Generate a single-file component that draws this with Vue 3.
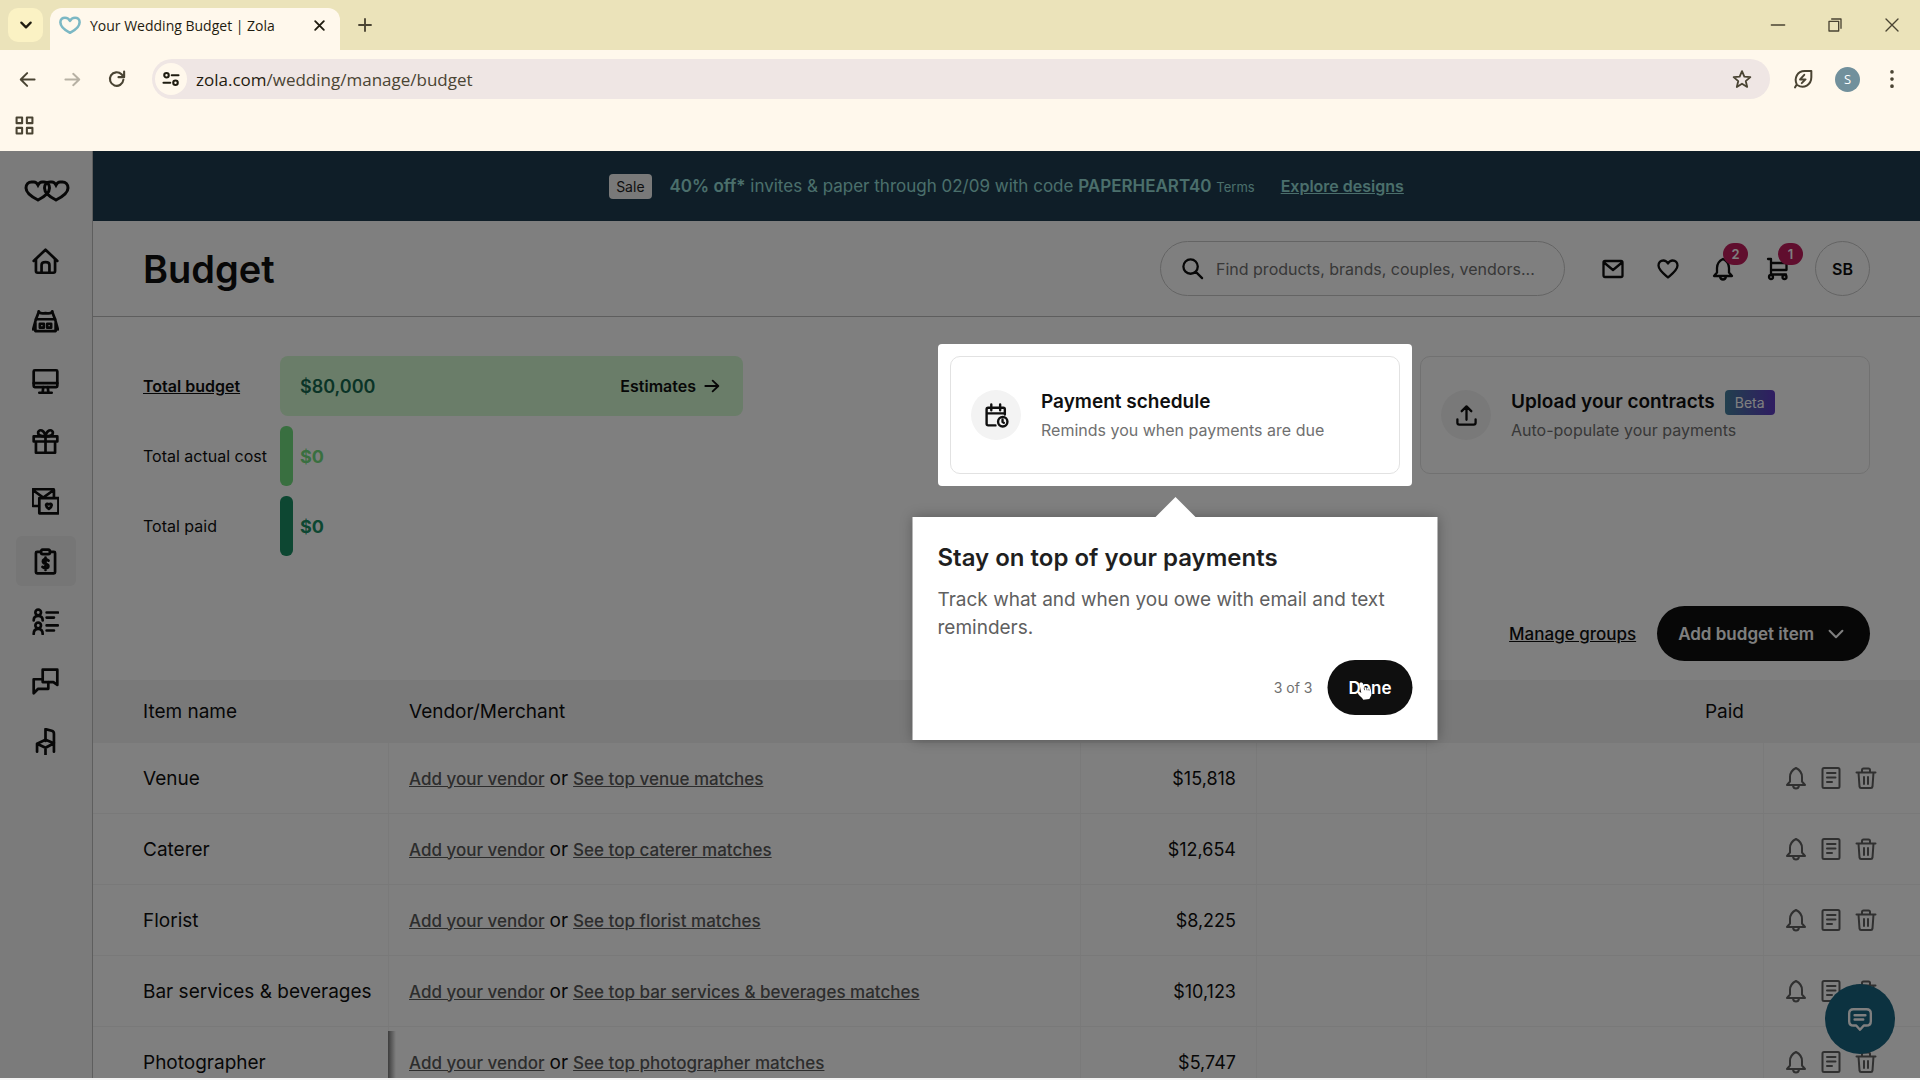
<template>
  <div class="window">
    <header class="chrome">
      <div class="tab-strip">
        <button class="tab-search" aria-label="Search tabs">
          <Icon name="chevron" :size="16" :stroke="3.4" />
        </button>
        <div class="tab">
          <Icon class="favicon" name="zheart" :size="22" :stroke="2.8" />
          <span class="tab-title">Your Wedding Budget | Zola</span>
          <button class="plain tab-close" aria-label="Close tab">
            <Icon name="close" :size="13" :stroke="3.4" />
          </button>
        </div>
        <button class="plain new-tab" aria-label="New tab">
          <Icon name="plus" :size="16" :stroke="2.8" />
        </button>
        <div class="window-controls">
          <button class="plain" aria-label="Minimize"><Icon name="minus" :size="16" :stroke="2" /></button>
          <button class="plain" aria-label="Restore"><Icon name="restore" :size="16" :stroke="2" /></button>
          <button class="plain" aria-label="Close"><Icon name="close" :size="18" :stroke="1.8" /></button>
        </div>
      </div>
      <div class="toolbar">
        <div class="nav-buttons">
          <button class="plain" aria-label="Back"><Icon name="back" :size="17" :stroke="2.8" /></button>
          <button class="plain faded" aria-label="Forward"><Icon name="forward" :size="17" :stroke="2.8" /></button>
          <button class="plain" aria-label="Reload"><Icon name="reload" :size="18" :stroke="2.8" /></button>
        </div>
        <div class="address">
          <span class="site-info"><Icon name="tune" :size="18" :stroke="2.8" /></span>
          <span class="url"><b>zola.com</b>/wedding/manage/budget</span>
          <button class="plain" aria-label="Bookmark"><Icon name="star" :size="20" :stroke="2.2" /></button>
        </div>
        <div class="toolbar-end">
          <button class="plain" aria-label="Energy saver"><Icon name="leaf" :size="20" :stroke="2.4" /></button>
          <button class="profile">S</button>
          <button class="plain" aria-label="Menu"><Icon name="dots" :size="20" :stroke="4.4" /></button>
        </div>
      </div>
      <div class="bookmarks">
        <button class="plain" aria-label="Apps"><Icon name="apps" :size="19" :stroke="2.6" /></button>
      </div>
    </header>

    <div class="page">
      <nav class="sidebar">
        <a href="#" class="logo" aria-label="Zola">
          <svg viewBox="0 0 46 22" width="46" height="22" aria-hidden="true">
            <path d="M14 20C8 17 2 13.500 2 8C2 4 4.500 2 7.500 2H10C12 2 13.200 3.500 14 5C14.800 3.500 16 2 18 2H20C23.500 2 25.500 4.500 25.500 8C25.500 13 20 17 14 20Z" />
            <path d="M32 20C26 17 20.500 13 20.500 8C20.500 4.500 22.500 2 26 2H28C30 2 31.200 3.500 32 5C32.800 3.500 34 2 36 2H38.500C41.500 2 44 4 44 8C44 13.500 38 17 32 20Z" />
          </svg>
        </a>
        <a
          v-for="item in navItems"
          :key="item.icon"
          href="#"
          class="nav-item"
          :class="{ active: item.active }"
          :aria-label="item.label"
        >
          <Icon :name="item.icon" :size="27" :stroke="2.4" />
        </a>
      </nav>

      <main class="main">
        <div class="banner">
          <span class="sale">Sale</span>
          <p class="promo">
            <b>40% off*</b> invites &amp; paper through 02/09 with code
            <b>PAPERHEART40</b> <a href="#" class="terms">Terms</a>
          </p>
          <a href="#" class="explore">Explore designs</a>
        </div>

        <div class="page-header">
          <h1>Budget</h1>
          <label class="search">
            <Icon name="search" :size="23" :stroke="2.4" />
            <input type="text" aria-label="Search" placeholder="Find products, brands, couples, vendors..." />
          </label>
          <div class="header-actions">
            <button
              v-for="action in headerActions"
              :key="action.icon"
              class="plain action"
              :aria-label="action.label"
            >
              <Icon :name="action.icon" :size="24" :stroke="2.3" />
              <span v-if="action.count" class="badge">{{ action.count }}</span>
            </button>
            <button class="avatar">SB</button>
          </div>
        </div>

        <section class="overview">
          <div class="totals">
            <a href="#" class="total-label strong">Total budget</a>
            <div class="total-bar">
              <span>$80,000</span>
              <a href="#" class="estimates">Estimates <Icon name="forward" :size="16" :stroke="2.8" /></a>
            </div>
            <span class="total-label">Total actual cost</span>
            <div class="total-line actual"><i></i>$0</div>
            <span class="total-label">Total paid</span>
            <div class="total-line paid"><i></i>$0</div>
          </div>

          <div class="cards">
            <div class="spotlight">
              <a href="#" class="card">
                <span class="card-icon"><Icon name="schedule" :size="25" :stroke="2.3" /></span>
                <span class="card-text">
                  <span class="card-title">Payment schedule</span>
                  <span class="card-sub">Reminds you when payments are due</span>
                </span>
              </a>
              <div class="tour" role="dialog" aria-labelledby="tour-title">
                <h2 id="tour-title">Stay on top of your payments</h2>
                <p>Track what and when you owe with email and text reminders.</p>
                <div class="tour-footer">
                  <span>3 of 3</span>
                  <button class="done">Done</button>
                </div>
                <svg class="pointer" viewBox="0 0 20 24" width="16" height="20" aria-hidden="true">
                  <path d="M5 1.500C6.500 .8 7.800 1.500 8.200 3L9.500 8C10.500 6.800 12 7 12.500 8.200C13.500 7.500 15 7.800 15.300 9C16.500 8.600 17.700 9.200 18 10.800L18.600 15C18.800 18 17 20 16 22L8.500 23C7 20 3 18 1.500 14.500C1 13 3 12 4.300 13.200L6 14.500L3.800 4C3.500 2.800 4 2 5 1.500Z" />
                  <path class="crease" d="M9.500 8L10.200 11M12.500 8.500L13.200 11.200M15.300 9.300L15.800 11.600" />
                </svg>
              </div>
            </div>
            <a href="#" class="card">
              <span class="card-icon"><Icon name="upload" :size="23" :stroke="2.4" /></span>
              <span class="card-text">
                <span class="card-title">Upload your contracts <em>Beta</em></span>
                <span class="card-sub">Auto-populate your payments</span>
              </span>
            </a>
          </div>
        </section>

        <div class="table-actions">
          <a href="#">Manage groups</a>
          <button class="add-item">Add budget item <Icon name="chevron" :size="22" :stroke="2.2" /></button>
        </div>

        <table class="items">
          <colgroup>
            <col class="col-name" />
            <col />
            <col class="col-estimate" />
            <col class="col-actual" />
            <col class="col-paid" />
            <col class="col-tools" />
          </colgroup>
          <thead>
            <tr>
              <th>Item name</th>
              <th>Vendor/Merchant</th>
              <th></th>
              <th></th>
              <th class="num">Paid</th>
              <th></th>
            </tr>
          </thead>
          <tbody>
            <tr v-for="item in items" :key="item.name">
              <td>{{ item.name }}</td>
              <td class="vendor">
                <a href="#">Add your vendor</a>
                <span>or</span>
                <a href="#">See top {{ item.name.toLowerCase() }} matches</a>
              </td>
              <td class="num">{{ item.estimate }}</td>
              <td></td>
              <td></td>
              <td class="tools">
                <div>
                  <button class="plain" aria-label="Reminder"><Icon name="bell" :size="24" :stroke="2" /></button>
                  <button class="plain" aria-label="Notes"><Icon name="note" :size="24" :stroke="2" /></button>
                  <button class="plain" aria-label="Delete"><Icon name="trash" :size="24" :stroke="2" /></button>
                </div>
              </td>
            </tr>
          </tbody>
        </table>
      </main>

      <button class="chat" aria-label="Chat"><Icon name="chat" :size="26" :stroke="2.2" /></button>
    </div>
  </div>
</template>

<script setup>
import { h } from "vue";

// 24x24 stroke icons
const paths = {
  chevron: ["M5 8.500L12 15.500L19 8.500"],
  close: ["M4 4L20 20M20 4L4 20"],
  plus: ["M12 3V21M3 12H21"],
  minus: ["M2 12H22"],
  restore: ["M3 6.500H17.500V21H3Z", "M7 3H21V17"],
  back: ["M22 12H3M11.500 3L2.500 12L11.500 21"],
  forward: ["M2 12H21M13 4L21.500 12L13 20"],
  reload: ["M20.500 13A9 9 0 1 1 18 5.800L21 9M21.500 2V9.500H14"],
  tune: ["M6 4A3 3 0 1 1 6 10A3 3 0 1 1 6 4M13 7H22", "M2 17H11M18 14A3 3 0 1 1 18 20A3 3 0 1 1 18 14"],
  star: ["M12 2.500L14.800 9.200L22 9.800L16.500 14.500L18.200 21.500L12 17.700L5.800 21.500L7.500 14.500L2 9.800L9.200 9.200Z"],
  leaf: ["M2.500 22L4.500 18.500C1 11 5 2.500 14 2.500H22V10C22 19 13 24 5.500 19.500", "M13.500 7L8.500 12.500H15L10.500 17"],
  dots: ["M12 3.500V3.600M12 12V12.100M12 20.500V20.600"],
  apps: ["M2 2H9V9H2ZM15 2H22V9H15ZM2 15H9V22H2ZM15 15H22V22H15Z"],
  zheart: ["M12 20.500C5 17 1.500 13 1.500 9C1.500 5.500 4 4 6.500 4C9 4 11 5.500 12 7.500C13 5.500 15 4 17.500 4C20 4 22.500 5.500 22.500 9C22.500 13 19 17 12 20.500Z"],
  home: ["M1.500 11.500L12 1.500L22.500 11.500", "M3.500 10V20.500Q3.500 22 5 22H19Q20.500 22 20.500 20.500V10", "M8.500 22V15Q8.500 12.500 12 12.500Q15.500 12.500 15.500 15V22"],
  venue: ["M6 3C6.500 5 9 5 12 4.500C15 5 17.500 5 18 3", "M6 3.500L3.500 10H20.500L18 3.500", "M3.500 10L1 19M20.500 10L23 19M3 13V20.500H21V13", "M7 14H10.500V17.500H7ZM13.500 14H17V17.500H13.500Z"],
  monitor: ["M2.500 2H21.500Q22.500 2 22.500 3V16Q22.500 17 21.500 17H2.500Q1.500 17 1.500 16V3Q1.500 2 2.500 2Z", "M1.500 13.500H22.500M10 17L9.500 21.500M14 17L14.500 21.500M6.500 22H17.500"],
  gift: ["M1.500 7.500H22.500V12H1.500ZM3.500 12V22H20.500V12M12 7.500V22", "M12 7.500C8 7.500 5 6.500 5.500 3.500C6.500 .8 11 1.500 12 7.500C13 1.500 17.500 .8 18.500 3.500C19 6.500 16 7.500 12 7.500"],
  invites: ["M6 16H1.500Q.5 16 .5 15V2Q.5 1 1.500 1H18.500Q19.500 1 19.500 2V8M1 2L10 8.500L19 2", "M6.500 9H23.500V22.500H6.500Z", "M15 18.500C11 16 12.500 13 15 14.500C17.500 13 19 16 15 18.500Z"],
  budget: ["M8 3.500H4.500Q3.500 3.500 3.500 4.500V21.500Q3.500 22.500 4.500 22.500H19.500Q20.500 22.500 20.500 21.500V4.500Q20.500 3.500 19.500 3.500H16", "M9.500 1.500H14.500Q16 1.500 16 3.500Q16 5.500 14.500 5.500H9.500Q8 5.500 8 3.500Q8 1.500 9.500 1.500Z", "M14.700 11.200Q12 9 9.900 10.800Q9 13.500 12 14Q15.500 14.500 14.300 17.300Q12 19 9.300 16.800M12 8.500V19.500"],
  guests: ["M5.500 1.500A2.500 2.500 0 1 1 5.500 6.500A2.500 2.500 0 1 1 5.500 1.500M1.500 11Q1.500 7 5.500 7Q9.500 7 9.500 11", "M5.500 13A2.500 2.500 0 1 1 5.500 18A2.500 2.500 0 1 1 5.500 13M1.500 23Q1.500 18.500 5.500 18.500Q9.500 18.500 9.500 23", "M13 4H23M13 8.500H19.500M13 15.500H23M13 20H19.500"],
  messages: ["M9.500 10V1.500H22.500V15L19 12.500H15", "M9.500 10H1.500V22.500L5.500 18.500H14.500V12.500H9.500Z"],
  chair: ["M12 11.500V1L17.500 2.500Q19.500 3 19.500 5V13", "M4.500 14L12 10.500L19.500 13.500L12 17.500ZM4.500 14V21M19.500 13.500V21M12 17.500V24"],
  search: ["M10 2.500A7.500 7.500 0 1 1 10 17.500A7.500 7.500 0 1 1 10 2.500M15.500 15.500L22 22"],
  mail: ["M4 4H20Q21.500 4 21.500 5.500V18.500Q21.500 20 20 20H4Q2.500 20 2.500 18.500V5.500Q2.500 4 4 4ZM3 5.500L12 13L21 5.500"],
  heart: ["M12 20.500C8 17 2.500 13 2.500 8.500C2.500 5.500 4.500 3.500 7.300 3.500C9.500 3.500 11 4.800 12 6.500C13 4.800 14.500 3.500 16.700 3.500C19.500 3.500 21.500 5.500 21.500 8.500C21.500 13 16 17 12 20.500Z"],
  bell: ["M12 2C8 4 6 7 6 11V15.500L3 19H21L18 15.500V11C18 7 16 4 12 2ZM9 19.500Q9.500 22.500 12 22.500Q14.500 22.500 15 19.500"],
  cart: ["M2 2H5V17.500H20M5 6H20.500V13H5", "M5 18A2 2 0 1 1 5 22A2 2 0 1 1 5 18M18.500 18A2 2 0 1 1 18.500 22A2 2 0 1 1 18.500 18"],
  schedule: ["M11 21.500H4Q2.500 21.500 2.500 20V6Q2.500 4.500 4 4.500H18.500Q20 4.500 20 6V11M2.500 10H20M7 1.500V7M15.500 1.500V7", "M18 13.500A4.500 4.500 0 1 1 18 22.500A4.500 4.500 0 1 1 18 13.500M17.800 16V18.300L19 19"],
  upload: ["M12 16.500V3M7 7.500L12 2.500L17 7.500M2.500 16V19.500Q2.500 21.500 4.500 21.500H19.500Q21.500 21.500 21.500 19.500V16"],
  note: ["M5 2H19Q20.500 2 20.500 3.500V20.500Q20.500 22 19 22H5Q3.500 22 3.500 20.500V3.500Q3.500 2 5 2ZM8 7H16.500M8 11.500H16.500M8 16H13"],
  trash: ["M2.500 6.500H21.500M8 6.500V4Q8 2.500 9.500 2.500H14.500Q16 2.500 16 4V6.500M4.500 6.500L5.500 20.500Q5.700 22 7 22H17Q18.300 22 18.500 20.500L19.500 6.500M10 11V18M14 11V18"],
  chat: ["M6 3H18Q22 3 22 7V14Q22 18 18 18H15.500L12 22L8.500 18H6Q2 18 2 14V7Q2 3 6 3ZM7 8.500H17M7 12.500H15"],
};

const Icon = (props) =>
  h(
    "svg",
    {
      viewBox: "0 0 24 24",
      width: props.size,
      height: props.size,
      fill: "none",
      stroke: "currentColor",
      "stroke-width": props.stroke,
      "stroke-linecap": "round",
      "stroke-linejoin": "round",
      "aria-hidden": "true",
    },
    paths[props.name].map((d) => h("path", { d }))
  );
Icon.props = ["name", "size", "stroke"];

const navItems = [
  { icon: "home", label: "Home" },
  { icon: "venue", label: "Venues" },
  { icon: "monitor", label: "Website" },
  { icon: "gift", label: "Registry" },
  { icon: "invites", label: "Invites" },
  { icon: "budget", label: "Budget", active: true },
  { icon: "guests", label: "Guest list" },
  { icon: "messages", label: "Messages" },
  { icon: "chair", label: "Seating" },
];

const headerActions = [
  { icon: "mail", label: "Inbox" },
  { icon: "heart", label: "Favorites" },
  { icon: "bell", label: "Notifications", count: 2 },
  { icon: "cart", label: "Cart", count: 1 },
];

const items = [
  { name: "Venue", estimate: "$15,818" },
  { name: "Caterer", estimate: "$12,654" },
  { name: "Florist", estimate: "$8,225" },
  { name: "Bar services & beverages", estimate: "$10,123" },
  { name: "Photographer", estimate: "$5,747" },
];
</script>

<style>
body {
  margin: 0;
  overflow: hidden;
}
</style>

<style scoped>
.window {
  display: flex;
  flex-direction: column;
  height: 100vh;
  padding-bottom: 2px;
  box-sizing: border-box;
  background: #f4f4f4;
  color: #0f0f0f;
  font-family: Inter, "Liberation Sans", sans-serif;
}

.window * {
  box-sizing: border-box;
}

svg {
  display: block;
  flex: none;
}

a {
  color: inherit;
}

button {
  font-family: inherit;
  color: inherit;
  border: 0;
  padding: 0;
  cursor: pointer;
}

.plain {
  display: flex;
  align-items: center;
  justify-content: center;
  background: none;
}

/* Browser chrome */
.chrome {
  flex: none;
  background: #fff8ec;
  color: #4a4433;
  font-family: "Open Sans", "Noto Sans", sans-serif;
}

.tab-strip {
  display: flex;
  align-items: center;
  height: 50px;
  padding-left: 8px;
  background: #ebe3ba;
}

.tab-search {
  display: flex;
  align-items: center;
  justify-content: center;
  width: 35px;
  height: 34px;
  border-radius: 10px;
  background: #fbf2c4;
  color: #1f1c10;
}

.tab {
  display: flex;
  align-items: center;
  align-self: flex-end;
  width: 290px;
  height: 42px;
  margin-left: 7px;
  padding: 0 14px 8px 9px;
  border-radius: 12px 12px 0 0;
  background: #fff8ec;
  color: #1f1c10;
}

.favicon {
  color: #7cb8c4;
}

.tab-title {
  flex: 1;
  margin-left: 9px;
  font-size: 14px;
  white-space: nowrap;
}

.new-tab {
  width: 50px;
  height: 34px;
}

.window-controls {
  display: flex;
  margin-left: auto;
}

.window-controls button {
  width: 57px;
  height: 48px;
}

.toolbar {
  display: flex;
  align-items: center;
  height: 58px;
  padding: 0 8px 0 7px;
}

.nav-buttons {
  display: flex;
  gap: 5px;
  margin-right: 15px;
}

.nav-buttons button,
.toolbar-end .plain {
  width: 40px;
  height: 40px;
}

.nav-buttons .faded {
  color: #b7b1a4;
}

.address {
  display: flex;
  flex: 1;
  align-items: center;
  height: 40px;
  padding: 0 18px 0 3px;
  border-radius: 20px;
  background: #efe6e4;
}

.site-info {
  display: flex;
  align-items: center;
  justify-content: center;
  width: 32px;
  height: 32px;
  border-radius: 50%;
  background: #fff8ec;
  color: #1f1c10;
}

.url {
  flex: 1;
  margin-left: 9px;
  font-size: 17px;
}

.url b {
  font-weight: 400;
  color: #1f1c10;
}

.toolbar-end {
  display: flex;
  align-items: center;
  gap: 12px;
  margin-left: 13px;
}

.profile {
  width: 25px;
  height: 25px;
  border-radius: 50%;
  background: #71909c;
  color: #fff;
  font-size: 13px;
}

.bookmarks {
  height: 43px;
  padding: 8px 15px;
}

/* Zola page */
.page {
  position: relative;
  display: flex;
  flex: 1;
  min-height: 0;
  overflow: hidden;
  background: #fff;
}

.sidebar {
  display: flex;
  flex: none;
  flex-direction: column;
  align-items: center;
  gap: 10px;
  width: 93px;
  padding-right: 1px;
  border-right: 1px solid #bdbdbd;
  background: #f6f6f6;
}

.logo {
  display: flex;
  align-items: center;
  height: 75px;
  padding: 4px 0 0 2px;
}

.logo path {
  fill: none;
  stroke: currentColor;
  stroke-width: 3;
}

.nav-item {
  display: flex;
  align-items: center;
  justify-content: center;
  width: 60px;
  height: 50px;
  border-radius: 6px;
}

.nav-item.active {
  background: #ececec;
}

.main {
  flex: 1;
  min-width: 0;
}

.banner {
  display: flex;
  align-items: center;
  justify-content: center;
  height: 70px;
  background: #1e3d50;
  color: #96dfd8;
  font-size: 17px;
  white-space: nowrap;
}

.sale {
  padding: 0 7px;
  border-radius: 4px;
  background: #f2f2f2;
  color: #1f1f1f;
  font-size: 14px;
  line-height: 25px;
}

.promo {
  margin: 0 26px 0 18px;
}

.banner b {
  font-weight: 600;
}

.terms {
  font-size: 13px;
  text-decoration: none;
}

.explore {
  font-size: 16px;
  font-weight: 600;
}

.page-header {
  display: flex;
  align-items: center;
  height: 96px;
  padding: 0 50px;
  border-bottom: 1px solid #bdbdbd;
}

h1 {
  margin: 0;
  font-size: 38px;
  font-weight: 600;
}

.search {
  display: flex;
  align-items: center;
  width: 405px;
  height: 55px;
  margin-left: auto;
  padding: 0 20px;
  border: 1px solid #c8c8c8;
  border-radius: 28px;
}

.search input {
  flex: 1;
  min-width: 0;
  margin-left: 12px;
  padding: 0;
  border: 0;
  outline: 0;
  background: none;
  font-family: inherit;
  font-size: 16px;
}

.search input::placeholder {
  color: #707070;
  opacity: 1;
}

.header-actions {
  display: flex;
  margin-left: 20px;
}

.action {
  position: relative;
  width: 55px;
  height: 55px;
}

.badge {
  position: absolute;
  top: 2px;
  right: 2px;
  min-width: 25px;
  border-radius: 12px;
  background: #c01c5c;
  color: #fff;
  font-size: 13px;
  font-weight: 600;
  line-height: 22px;
}

.avatar {
  width: 55px;
  height: 55px;
  margin-left: 10px;
  border: 1px solid #c8c8c8;
  border-radius: 50%;
  background: none;
  font-size: 16px;
  font-weight: 600;
}

.overview {
  display: grid;
  grid-template-columns: minmax(0, 807fr) minmax(0, 920fr);
  align-items: start;
  padding: 39px 50px 50px;
}

.totals {
  display: grid;
  grid-template-columns: 137px minmax(0, 463px);
  grid-auto-rows: 60px;
  align-items: center;
  gap: 10px 0;
  font-size: 16px;
  white-space: nowrap;
}

.strong {
  font-weight: 600;
}

.total-bar {
  display: flex;
  align-items: center;
  justify-content: space-between;
  height: 60px;
  padding: 0 23px 0 20px;
  border-radius: 8px;
  background: #d4fad2;
  color: #14694f;
  font-size: 18px;
  font-weight: 600;
}

.estimates {
  display: flex;
  align-items: center;
  gap: 8px;
  color: #0f0f0f;
  font-size: 16px;
  font-weight: 600;
  text-decoration: none;
}

.total-line {
  display: flex;
  align-items: center;
  gap: 7px;
  font-size: 18px;
  font-weight: 700;
}

.total-line i {
  width: 13px;
  height: 60px;
  border-radius: 6px;
  background: currentColor;
}

.actual {
  color: #73df80;
}

.paid {
  color: #1a8f64;
}

.cards {
  display: grid;
  grid-template-columns: repeat(2, minmax(0, 1fr));
  gap: 20px;
}

.card {
  display: flex;
  align-items: center;
  gap: 20px;
  height: 118px;
  padding: 0 20px;
  border: 1px solid #e2e2e2;
  border-radius: 10px;
  text-decoration: none;
  white-space: nowrap;
}

.card-icon {
  display: flex;
  align-items: center;
  justify-content: center;
  width: 50px;
  height: 50px;
  border-radius: 50%;
  background: #f3f3f3;
}

.card-text {
  display: flex;
  flex-direction: column;
  padding-top: 2px;
}

.card-title {
  display: flex;
  align-items: center;
  font-size: 19px;
  font-weight: 600;
  line-height: 28px;
}

.card-title em {
  margin-left: 10px;
  padding: 0 10px;
  border-radius: 4px;
  background: linear-gradient(90deg, #44809c, #5f3ac4);
  color: #fff;
  font-size: 14px;
  font-style: normal;
  font-weight: 400;
  line-height: 25px;
}

.card-sub {
  color: #707070;
  font-size: 16px;
  line-height: 28px;
}

/* The highlighted card dims the rest of the page */
.spotlight {
  position: relative;
  z-index: 2;
}

.spotlight::before {
  content: "";
  position: absolute;
  inset: -12px;
  z-index: -1;
  border-radius: 4px;
  background: #fff;
  box-shadow: 0 0 0 3000px rgba(0, 0, 0, 0.5);
}

.tour {
  position: absolute;
  top: calc(100% + 43px);
  left: 50%;
  width: 525px;
  padding: 24px 25px 25px;
  background: #fff;
  box-shadow: 0 0 12px rgba(0, 0, 0, 0.3);
  transform: translateX(-50%);
}

.tour::before {
  content: "";
  position: absolute;
  bottom: 100%;
  left: 50%;
  margin-left: -20px;
  border: 20px solid transparent;
  border-top-width: 0;
  border-bottom-color: #fff;
}

.tour h2 {
  margin: 0 0 11px;
  color: #1f1f1f;
  font-size: 24px;
  font-weight: 600;
  line-height: 34px;
}

.tour p {
  margin: 0 0 18px;
  color: #606060;
  font-size: 19px;
  line-height: 28px;
}

.tour-footer {
  display: flex;
  align-items: center;
  justify-content: flex-end;
  gap: 15px;
  color: #707070;
  font-size: 14px;
}

.done {
  height: 55px;
  padding: 0 21px;
  border-radius: 28px;
  background: #0f0f0f;
  color: #fff;
  font-size: 17px;
  font-weight: 600;
}

.pointer {
  position: absolute;
  right: 65px;
  bottom: 39px;
}

.pointer path {
  fill: #fff;
}

.pointer .crease {
  fill: none;
  stroke: #333;
}

.table-actions {
  display: flex;
  align-items: center;
  justify-content: flex-end;
  gap: 21px;
  padding: 0 50px 19px;
  font-size: 17px;
  font-weight: 500;
}

.add-item {
  display: flex;
  align-items: center;
  gap: 11px;
  height: 55px;
  padding: 0 23px 0 21px;
  border-radius: 28px;
  background: #0f0f0f;
  color: #fff;
  font-size: 17px;
  font-weight: 600;
}

.items {
  width: 100%;
  border-collapse: separate;
  border-spacing: 0;
  table-layout: fixed;
  font-size: 19px;
  white-space: nowrap;
}

.col-name {
  width: 296px;
}

.col-estimate {
  width: 176px;
}

.col-actual {
  width: 170px;
}

.col-paid {
  width: 337px;
}

.col-tools {
  width: 156px;
}

.items th {
  height: 63px;
  padding: 0 20px;
  background: #f3f3f3;
  font-weight: 400;
  text-align: left;
}

.items td {
  height: 71px;
  padding: 0 20px;
  border-right: 1px solid #f4f4f4;
  border-bottom: 1px solid #f2f2f2;
}

.items th:first-child,
.items td:first-child {
  padding: 0 0 0 50px;
}

.items .num {
  text-align: right;
}

.items td.num {
  font-size: 18px;
}

.vendor span {
  margin: 0 5px;
}

.vendor a {
  color: #5a5a5a;
  font-size: 17px;
  font-weight: 500;
}

.items tr:last-child td:first-child {
  position: relative;
}

.items tr:last-child td:first-child::after {
  content: "";
  position: absolute;
  top: 4px;
  right: -8px;
  bottom: 0;
  width: 8px;
  background: linear-gradient(90deg, #7a7a7a, #fff);
}

.items .tools {
  padding: 0;
  border-right: 0;
}

.tools div {
  display: flex;
  gap: 11px;
  padding-left: 20px;
  color: #606060;
}

.chat {
  position: absolute;
  right: 25px;
  bottom: 24px;
  display: flex;
  align-items: center;
  justify-content: center;
  width: 70px;
  height: 70px;
  border-radius: 50%;
  background: #186480;
  color: #fff;
}
</style>
